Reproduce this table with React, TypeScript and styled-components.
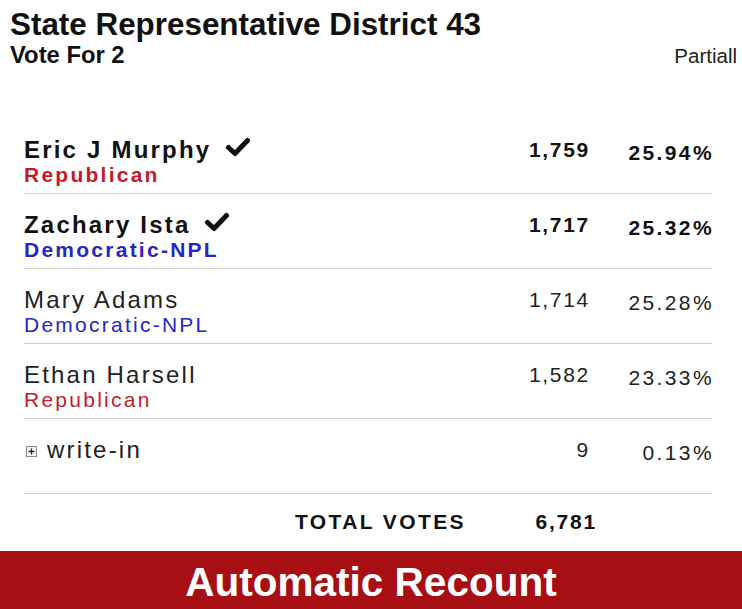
import styled, { createGlobalStyle } from "styled-components";

const GlobalStyle = createGlobalStyle`
  html, body {
    margin: 0;
    padding: 0;
    background: #ffffff;
    overflow: hidden;
  }

  body {
    font-family: "Liberation Sans", Arial, sans-serif;
    color: #111111;
  }
`;

type Candidate = {
  name: string;
  party?: "Republican" | "Democratic-NPL";
  votes: string;
  percent: string;
  elected?: boolean;
  writeIn?: boolean;
};

const candidates: Candidate[] = [
  { name: "Eric J Murphy", party: "Republican", votes: "1,759", percent: "25.94%", elected: true },
  { name: "Zachary Ista", party: "Democratic-NPL", votes: "1,717", percent: "25.32%", elected: true },
  { name: "Mary Adams", party: "Democratic-NPL", votes: "1,714", percent: "25.28%" },
  { name: "Ethan Harsell", party: "Republican", votes: "1,582", percent: "23.33%" },
  { name: "write-in", votes: "9", percent: "0.13%", writeIn: true },
];

const partyColors = {
  Republican: "#c8192b",
  "Democratic-NPL": "#2626c4",
};

const CheckMark = () => (
  <svg width="26" height="20" viewBox="0 0 26 20">
    <polyline
      points="3.5,10.5 10,16.5 22.5,3.5"
      fill="none"
      stroke="#111"
      strokeWidth="5"
      strokeLinecap="round"
      strokeLinejoin="round"
    />
  </svg>
);

const ExpandBox = () => (
  <svg width="11" height="11" viewBox="0 0 11 11">
    <rect x="0.5" y="0.5" width="10" height="10" fill="#f6f6f6" stroke="#8a8a8a" />
    <path d="M5.5 2.5v6M2.5 5.5h6" stroke="#222" strokeWidth="1.3" />
  </svg>
);

const App = () => {
  return (
    <>
      <GlobalStyle />
      <Page>
        <Header>
          <Title>State Representative District 43</Title>
          <SubRow>
            <VoteFor>Vote For 2</VoteFor>
            <Status>Partiall</Status>
          </SubRow>
        </Header>

        <Results>
          {candidates.map((c) => (
            <Row key={c.name}>
              <NameCell>
                <NameLine>
                  {c.writeIn && (
                    <BoxWrap>
                      <ExpandBox />
                    </BoxWrap>
                  )}
                  <Name $bold={!!c.elected}>{c.name}</Name>
                  {c.elected && (
                    <CheckWrap>
                      <CheckMark />
                    </CheckWrap>
                  )}
                </NameLine>
                <Party $bold={!!c.elected} $color={c.party ? partyColors[c.party] : "#111"}>
                  {c.party ?? "\u00a0"}
                </Party>
              </NameCell>
              <Votes $bold={!!c.elected}>{c.votes}</Votes>
              <Percent $bold={!!c.elected}>{c.percent}</Percent>
            </Row>
          ))}
          <TotalRow>
            <TotalLabel>TOTAL VOTES</TotalLabel>
            <TotalValue>6,781</TotalValue>
          </TotalRow>
        </Results>

        <Banner>Automatic Recount</Banner>
      </Page>
    </>
  );
};

export default App;

const Page = styled.div`
  width: 742px;
  display: flex;
  flex-direction: column;
`;

const Header = styled.header`
  padding: 7px 5px 0 10px;
`;

const Title = styled.h1`
  margin: 0;
  font-size: 31.4px;
  line-height: 36px;
  font-weight: 700;
  color: #111;
`;

const SubRow = styled.div`
  display: flex;
  justify-content: space-between;
  align-items: baseline;
`;

const VoteFor = styled.div`
  font-size: 23.8px;
  line-height: 24px;
  font-weight: 700;
`;

const Status = styled.div`
  font-size: 20.5px;
  line-height: 24px;
  color: #222;
`;

const Results = styled.section`
  margin: 51px 30px 0 24px;
`;

const Row = styled.div`
  display: grid;
  grid-template-columns: 1fr 100px 124px;
  padding: 18px 0 6px;
  border-bottom: 1px solid #cfcfcf;
`;

const NameCell = styled.div`
  display: flex;
  flex-direction: column;
`;

const NameLine = styled.div`
  display: flex;
  align-items: center;
  height: 26px;
`;

const Name = styled.span<{ $bold: boolean }>`
  font-size: 24px;
  line-height: 26px;
  font-weight: ${(p) => (p.$bold ? 700 : 400)};
  letter-spacing: 2.2px;
  color: ${(p) => (p.$bold ? "#111" : "#222")};
`;

const CheckWrap = styled.span`
  display: inline-flex;
  margin-left: 14px;
  margin-top: -6px;
`;

const BoxWrap = styled.span`
  display: inline-flex;
  margin: 2px 10px 0 2px;
`;

const Party = styled.span<{ $bold: boolean; $color: string }>`
  font-size: 21px;
  line-height: 24px;
  font-weight: ${(p) => (p.$bold ? 700 : 400)};
  letter-spacing: 2.25px;
  color: ${(p) => p.$color};
`;

const Votes = styled.div<{ $bold: boolean }>`
  font-size: 21px;
  line-height: 26px;
  text-align: right;
  letter-spacing: 1.7px;
  margin-right: -2px;
  font-weight: ${(p) => (p.$bold ? 700 : 400)};
  color: ${(p) => (p.$bold ? "#111" : "#222")};
`;

const Percent = styled(Votes)`
  padding-top: 3px;
  letter-spacing: 2.4px;
`;

const TotalRow = styled.div`
  display: grid;
  grid-template-columns: 1fr 107px 117px;
  grid-template-areas: "label value .";
  padding: 15px 0 16px;
`;

const TotalLabel = styled.div`
  grid-area: label;
  text-align: right;
  padding-right: 22px;
  font-size: 21px;
  line-height: 26px;
  font-weight: 700;
  letter-spacing: 2.4px;
`;

const TotalValue = styled.div`
  grid-area: value;
  text-align: right;
  margin-right: -2px;
  font-size: 21px;
  line-height: 26px;
  font-weight: 700;
  letter-spacing: 1.8px;
`;

const Banner = styled.div`
  background: #a80f14;
  color: #ffffff;
  height: 62px;
  text-align: center;
  font-size: 40.5px;
  line-height: 62px;
  font-weight: 700;
`;
